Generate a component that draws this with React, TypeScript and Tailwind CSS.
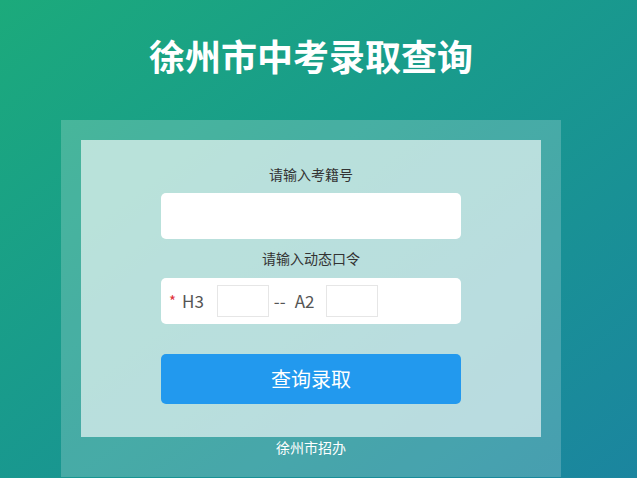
import React from "react";

export default function App() {
  return (
    <div className="h-[478px] w-full overflow-hidden bg-linear-to-br from-[#1caa7b] to-[#1b859f] font-['Noto_Sans_CJK_SC','Noto_Sans',sans-serif]">
      <div className="ml-[61px] w-[500px]">
        <h1 className="h-[120px] pt-[28px] text-center text-[36px] font-bold leading-[54px] text-white">
          徐州市中考录取查询
        </h1>
        <div className="bg-white/20 px-[20px] pt-[20px] pb-[20px]">
          <div className="flex flex-col items-center bg-white/[0.62] pt-[24px] pb-[33px]">
            <div className="text-[14px] leading-[20px] text-[#333]">请输入考籍号</div>
            <div className="mt-[9px] h-[46px] w-[300px] rounded-[5px] bg-white" />
            <div className="mt-[9px] text-[14px] leading-[20px] text-[#333]">请输入动态口令</div>
            <div className="mt-[10px] flex h-[46px] w-[300px] items-center rounded-[5px] bg-white pl-[8px] text-[17px] text-[#555]">
              <span className="text-[15px] text-[#e0323a]">*</span>
              <span className="ml-[6px]">H3</span>
              <div className="ml-[13px] h-[32px] w-[52px] border border-[#e6e6e6]" />
              <span className="ml-[5px]">--</span>
              <span className="ml-[9px]">A2</span>
              <div className="ml-[12px] h-[32px] w-[52px] border border-[#e6e6e6]" />
            </div>
            <button className="mt-[30px] flex h-[50px] w-[300px] items-center justify-center rounded-[5px] bg-[#2299ee] text-[20px] text-white">
              查询录取
            </button>
          </div>
          <div className="text-center text-[14px] leading-[20px] text-white">徐州市招办</div>
        </div>
      </div>
    </div>
  );
}
